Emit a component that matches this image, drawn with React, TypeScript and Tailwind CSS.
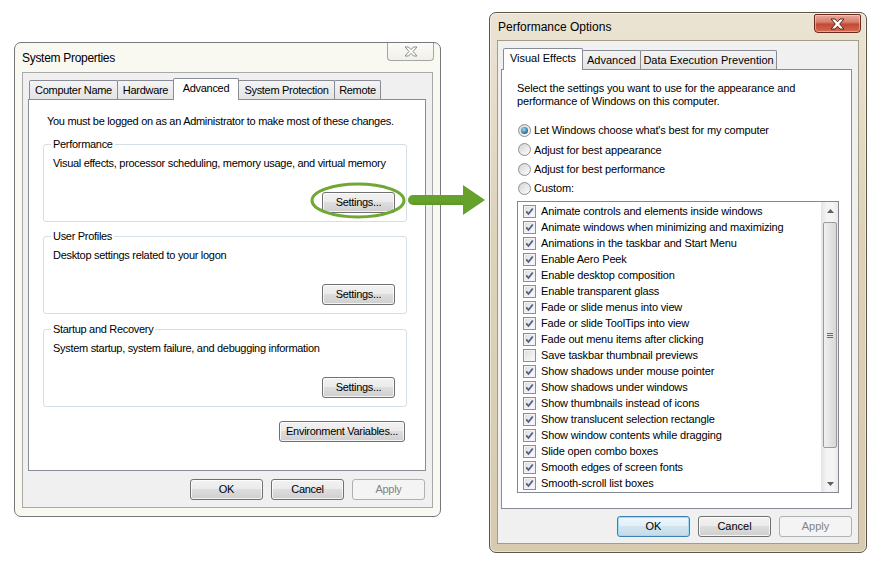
import type { ReactNode } from 'react';

type BtnKind = 'normal' | 'default' | 'disabled';

function Btn({ children, kind = 'normal', className = '' }: { children: ReactNode; kind?: BtnKind; className?: string }) {
  const look =
    kind === 'disabled'
      ? 'border-[#adb2b5] text-[#838383] bg-[#f4f4f4]'
      : kind === 'default'
      ? 'border-[#3c7fb1] text-black bg-[linear-gradient(180deg,#eef7fc_0%,#e3f0f8_45%,#d2e4ef_50%,#c5dbea_100%)] shadow-[inset_0_0_0_1px_#9fdcf8]'
      : 'border-[#707070] text-black bg-[linear-gradient(180deg,#f2f2f2_0%,#ebebeb_45%,#dddddd_50%,#cfcfcf_100%)] shadow-[inset_0_0_0_1px_rgba(255,255,255,0.75)]';
  return (
    <div className={`flex h-[21px] items-center justify-center whitespace-nowrap rounded-[3px] border text-[11px] leading-none ${look} ${className}`}>
      {children}
    </div>
  );
}

function Tab({ label, selected = false, className = '' }: { label: string; selected?: boolean; className?: string }) {
  return (
    <div
      className={`flex items-center justify-center whitespace-nowrap rounded-t-[2px] border border-b-0 border-[#898c95] text-[11px] ${
        selected
          ? 'relative z-10 -mb-px h-[22px] bg-white pb-[3px]'
          : 'h-[19px] bg-[linear-gradient(180deg,#f4f4f4,#e3e3e3)]'
      } ${className}`}
    >
      {label}
    </div>
  );
}

function GroupBox({ label, text, className = '' }: { label: string; text: string; className?: string }) {
  return (
    <div className={`relative flex h-[78px] w-[364px] flex-col rounded-[3px] border border-[#d5dfe5] pb-[8px] pl-[9px] pr-[11px] pt-[11px] ${className}`}>
      <span className="absolute -top-[8px] left-[7px] bg-white px-[2px] leading-[14px]">{label}</span>
      <div className="whitespace-nowrap leading-[14px]">{text}</div>
      <Btn className="mt-auto w-[73px] self-end">Settings...</Btn>
    </div>
  );
}

function Check({ on }: { on: boolean }) {
  return (
    <span className="flex h-[13px] w-[13px] shrink-0 items-center justify-center border border-[#8e8f8f] bg-[linear-gradient(135deg,#dcdcdc,#fbfbfb)] shadow-[inset_0_0_0_1px_#f3f3f3]">
      {on && (
        <svg width="9" height="9" viewBox="0 0 9 9">
          <path d="M1.3 4.4 L3.5 7 L7.8 1.4" fill="none" stroke="#4b5c88" strokeWidth="1.7" />
        </svg>
      )}
    </span>
  );
}

function Radio({ on }: { on: boolean }) {
  return (
    <span className="flex h-[13px] w-[13px] shrink-0 items-center justify-center rounded-full border border-[#8e8f8f] bg-[linear-gradient(135deg,#d4d4d4,#fdfdfd)]">
      {on && <span className="h-[7px] w-[7px] rounded-full bg-[radial-gradient(circle_at_40%_35%,#9bd8f8,#2a6a9c_70%,#1c4a78)]" />}
    </span>
  );
}

const effects: [string, boolean][] = [
  ['Animate controls and elements inside windows', true],
  ['Animate windows when minimizing and maximizing', true],
  ['Animations in the taskbar and Start Menu', true],
  ['Enable Aero Peek', true],
  ['Enable desktop composition', true],
  ['Enable transparent glass', true],
  ['Fade or slide menus into view', true],
  ['Fade or slide ToolTips into view', true],
  ['Fade out menu items after clicking', true],
  ['Save taskbar thumbnail previews', false],
  ['Show shadows under mouse pointer', true],
  ['Show shadows under windows', true],
  ['Show thumbnails instead of icons', true],
  ['Show translucent selection rectangle', true],
  ['Show window contents while dragging', true],
  ['Slide open combo boxes', true],
  ['Smooth edges of screen fonts', true],
  ['Smooth-scroll list boxes', true],
];

function SystemProperties() {
  return (
    <div className="absolute left-[14px] top-[42px] flex h-[475px] w-[427px] flex-col rounded-[7px] border border-[#75787c] bg-[#f9f8f1] px-[7px] pb-[8px] tracking-[-0.3px]">
      <div className="flex h-[29px] items-start justify-between">
        <span className="pt-[8px] text-[12px] leading-[14px]">System Properties</span>
        <div className="mr-[-1px] flex h-[18px] w-[47px] items-center justify-center rounded-b-[4px] border border-t-0 border-[#a5a5a5] bg-[linear-gradient(180deg,#fbfbf7,#f1f0ea)]">
          <svg width="14" height="11" viewBox="0 0 14 11">
            <path d="M1 1 H4.5 L7 3.6 L9.5 1 H13 L9 5.5 L13 10 H9.5 L7 7.4 L4.5 10 H1 L5 5.5 Z" fill="#fdfdfd" stroke="#8b8b8b" strokeWidth="1" />
          </svg>
        </div>
      </div>
      <div className="flex flex-1 flex-col border border-[#a9a9a9] bg-[#f0f0f0] pl-[5px] pr-[6px] pt-[5px]">
        <div className="flex h-[21px] items-end pl-[1px]">
          <Tab label="Computer Name" className="w-[89px]" />
          <Tab label="Hardware" className="-ml-px w-[57px]" />
          <Tab label="Advanced" selected className="-ml-px w-[66px]" />
          <Tab label="System Protection" className="-ml-px w-[97px]" />
          <Tab label="Remote" className="-ml-px w-[47px]" />
        </div>
        <div className="flex h-[372px] flex-col border border-[#898c95] bg-white px-[14px] text-[11px]">
          <div className="ml-[4px] mt-[14px] whitespace-nowrap leading-[14px]">
            You must be logged on as an Administrator to make most of these changes.
          </div>
          <GroupBox className="mt-[16px]" label="Performance" text="Visual effects, processor scheduling, memory usage, and virtual memory" />
          <GroupBox className="mt-[14px]" label="User Profiles" text="Desktop settings related to your logon" />
          <GroupBox className="mt-[15px]" label="Startup and Recovery" text="System startup, system failure, and debugging information" />
          <Btn className="mr-[6px] mt-[14px] w-[126px] self-end">Environment Variables...</Btn>
        </div>
        <div className="mt-[8px] flex justify-end gap-[8px] pr-px">
          <Btn className="w-[73px]">OK</Btn>
          <Btn className="w-[73px]">Cancel</Btn>
          <Btn kind="disabled" className="w-[73px]">Apply</Btn>
        </div>
      </div>
    </div>
  );
}

function PerformanceOptions() {
  return (
    <div className="absolute left-[489px] top-[12px] flex h-[541px] w-[378px] flex-col rounded-[7px] border border-[#5c5749] bg-[linear-gradient(180deg,#ebe4d3_0%,#ddd3bb_40%,#d6cbb1_100%)] px-[7px] pb-[8px] shadow-[inset_0_0_0_1px_rgba(255,255,255,0.45)]">
      <div className="flex h-[27px] items-start justify-between">
        <span className="pl-[1px] pt-[7px] text-[12px] leading-[14px]">Performance Options</span>
        <div className="mr-[-2px] mt-[1px] flex h-[19px] w-[47px] items-center justify-center rounded-b-[4px] rounded-t-[2px] border border-[#6b2a1c] bg-[linear-gradient(180deg,#e9a99a_0%,#d88070_40%,#c24a36_55%,#d46a50_100%)] shadow-[inset_0_0_0_1px_rgba(255,220,210,0.5)]">
          <svg width="15" height="12" viewBox="0 0 15 12">
            <path d="M1 1 H5 L7.5 3.8 L10 1 H14 L9.7 6 L14 11 H10 L7.5 8.2 L5 11 H1 L5.3 6 Z" fill="#ffffff" stroke="#5a2016" strokeWidth="1" />
          </svg>
        </div>
      </div>
      <div className="flex flex-1 flex-col border border-[#a59c86] bg-[#f0f0f0] pl-[3px] pr-[6px] pt-[8px]">
        <div className="flex h-[20px] items-end pl-[2px]">
          <Tab label="Visual Effects" selected className="w-[80px]" />
          <Tab label="Advanced" className="-ml-px w-[59px]" />
          <Tab label="Data Execution Prevention" className="-ml-px w-[137px]" />
        </div>
        <div className="flex h-[440px] flex-col border border-[#898c95] bg-white pl-[15px] text-[11px] tracking-[-0.15px]">
          <div className="mt-[12px] leading-[13px]">
            <div>Select the settings you want to use for the appearance and</div>
            <div>performance of Windows on this computer.</div>
          </div>
          <div className="mt-[13px] flex flex-col">
            {[
              ["Let Windows choose what's best for my computer", true],
              ['Adjust for best appearance', false],
              ['Adjust for best performance', false],
              ['Custom:', false],
            ].map(([label, on]) => (
              <div key={label as string} className="flex h-[19.3px] items-center gap-[3px] pl-[1px]">
                <Radio on={on as boolean} />
                <span>{label}</span>
              </div>
            ))}
          </div>
          <div className="mt-[3px] flex h-[292px] w-[322px] border border-[#828790] bg-white">
            <div className="flex flex-1 flex-col pl-[5px] pt-[1px]">
              {effects.map(([label, on]) => (
                <div key={label} className="flex h-[16px] items-center gap-[5px]">
                  <Check on={on} />
                  <span className="whitespace-nowrap leading-[16px]">{label}</span>
                </div>
              ))}
            </div>
            <div className="flex w-[17px] flex-col border-l border-[#e6e6e6] bg-[linear-gradient(90deg,#e6e6e6,#f4f4f4_30%,#f4f4f4_70%,#e9e9e9)]">
              <div className="flex h-[17px] items-center justify-center">
                <svg width="7" height="4" viewBox="0 0 7 4">
                  <path d="M0 4 L3.5 0 L7 4 Z" fill="#606060" />
                </svg>
              </div>
              <div className="mx-[1px] mt-[3px] flex h-[226px] items-center justify-center rounded-[2px] border border-[#9a9a9a] bg-[linear-gradient(90deg,#f0f0f0,#e4e4e4_50%,#d6d6d6)]">
                <div className="flex flex-col gap-[1px]">
                  <div className="h-px w-[6px] bg-[#6b6b6b]" />
                  <div className="h-px w-[6px] bg-[#6b6b6b]" />
                  <div className="h-px w-[6px] bg-[#6b6b6b]" />
                </div>
              </div>
              <div className="mt-auto flex h-[17px] items-center justify-center">
                <svg width="7" height="4" viewBox="0 0 7 4">
                  <path d="M0 0 L3.5 4 L7 0 Z" fill="#606060" />
                </svg>
              </div>
            </div>
          </div>
        </div>
        <div className="mt-[7px] flex justify-end gap-[8px]">
          <Btn kind="default" className="w-[73px]">OK</Btn>
          <Btn className="w-[73px]">Cancel</Btn>
          <Btn kind="disabled" className="w-[73px]">Apply</Btn>
        </div>
      </div>
    </div>
  );
}

export default function App() {
  return (
    <div className="relative h-[570px] w-[882px] overflow-hidden bg-white font-['Liberation_Sans',Arial,sans-serif] text-black">
      <SystemProperties />
      <PerformanceOptions />
      {/* highlight ring + pointer arrow */}
      <svg className="pointer-events-none absolute left-[305px] top-[178px]" width="185" height="46" viewBox="0 0 185 46">
        <ellipse cx="53" cy="22.5" rx="46" ry="16.5" fill="none" stroke="#6fa832" strokeWidth="3" />
        <path d="M108 17 H158 V7 L180 22 L158 37 V27 H108 A5 5 0 0 1 108 17 Z" fill="#66a22b" />
        <path d="M108 24.5 H158 V27 H108 Z" fill="#5a9224" opacity="0.6" />
      </svg>
    </div>
  );
}
